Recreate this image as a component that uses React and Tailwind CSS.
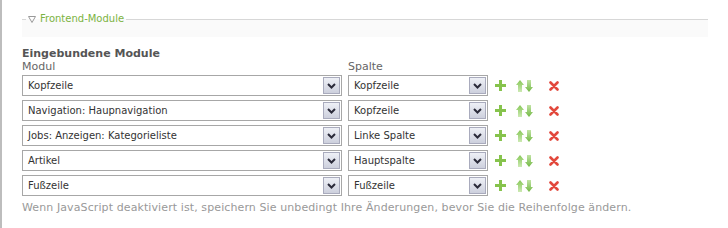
import React from "react";

const rows = [
  ["Kopfzeile", "Kopfzeile"],
  ["Navigation: Haupnavigation", "Kopfzeile"],
  ["Jobs: Anzeigen: Kategorieliste", "Linke Spalte"],
  ["Artikel", "Hauptspalte"],
  ["Fußzeile", "Fußzeile"],
];

// Old-style select box with grey dropdown button
function Select({ value, width }) {
  return (
    <div className={`${width} h-[21px] border border-[#a7a7a7] bg-white flex items-center`}>
      <span className="flex-1 pl-[5px] text-[10px] text-[#333] leading-none truncate">{value}</span>
      <span className="w-[17px] h-[17px] mr-[1px] border border-[#a9abbd] bg-gradient-to-b from-[#eef0f6] to-[#cdd0dd] flex items-center justify-center">
        <svg width="9" height="6" viewBox="0 0 9 6">
          <path d="M1 1 L4.5 4.5 L8 1" fill="none" stroke="#2b2b3a" strokeWidth="2" />
        </svg>
      </span>
    </div>
  );
}

function Plus() {
  return (
    <svg width="11" height="11" viewBox="0 0 11 11">
      <path d="M4 0h3v4h4v3H7v4H4V7H0V4h4z" fill="#86c34c" />
    </svg>
  );
}

function Up() {
  return (
    <svg width="8" height="12" viewBox="0 0 8 12">
      <defs>
        <linearGradient id="ug" x1="0" y1="0" x2="0" y2="1">
          <stop offset="0" stopColor="#86c756" />
          <stop offset="1" stopColor="#cdeab4" />
        </linearGradient>
      </defs>
      <path d="M4 0 L8 5 H6 V12 H2 V5 H0 Z" fill="url(#ug)" />
    </svg>
  );
}

function Down() {
  return (
    <svg width="8" height="12" viewBox="0 0 8 12">
      <defs>
        <linearGradient id="dg" x1="0" y1="0" x2="0" y2="1">
          <stop offset="0" stopColor="#c2e4a6" />
          <stop offset="1" stopColor="#72b843" />
        </linearGradient>
      </defs>
      <path d="M4 12 L8 7 H6 V0 H2 V7 H0 Z" fill="url(#dg)" />
    </svg>
  );
}

function Cross() {
  return (
    <svg width="10" height="10" viewBox="0 0 10 10">
      <path d="M1.5 1.5 L8.5 8.5 M8.5 1.5 L1.5 8.5" stroke="#e2483c" strokeWidth="2.6" strokeLinecap="round" />
    </svg>
  );
}

export default function App() {
  return (
    <div className="w-[728px] h-[228px] bg-white border-l-2 border-[#bdbdbd] font-['DejaVu_Sans',Verdana,sans-serif] overflow-hidden">
      <div className="pl-[20px] pt-[13px]">
        {/* Section header */}
        <fieldset className="w-[686px] h-[24px] border-0 border-t border-[#d7d7d7] bg-[#fafafa]">
          <legend className="ml-[4px] px-[2px] flex items-center gap-[4px] text-[10px] leading-[12px] text-[#7cb342]">
            <svg width="8" height="7" viewBox="0 0 8 7">
              <path d="M0.5 0.5 H7.5 L4 6.5 Z" fill="none" stroke="#9a9a9a" strokeWidth="1" />
            </svg>
            Frontend-Module
          </legend>
        </fieldset>

        {/* Module list */}
        <div className="mt-[10px]">
          <div className="text-[11px] font-bold text-[#555] leading-[13px]">Eingebundene Module</div>
          <div className="flex text-[11px] text-[#666] leading-[14px]">
            <span className="w-[326px]">Modul</span>
            <span>Spalte</span>
          </div>
          <div className="mt-[1px] flex flex-col gap-[4px]">
            {rows.map(([mod, col], i) => (
              <div key={i} className="flex items-center">
                <Select value={mod} width="w-[320px]" />
                <div className="ml-[6px]">
                  <Select value={col} width="w-[140px]" />
                </div>
                <div className="ml-[7px] flex items-center">
                  <Plus />
                  <span className="ml-[10px]"><Up /></span>
                  <span className="ml-[1px]"><Down /></span>
                  <span className="ml-[16px]"><Cross /></span>
                </div>
              </div>
            ))}
          </div>
          <p className="mt-[5px] text-[11px] tracking-[0.1px] text-[#999] leading-[13px]">
            Wenn JavaScript deaktiviert ist, speichern Sie unbedingt Ihre Änderungen, bevor Sie die Reihenfolge ändern.
          </p>
        </div>
      </div>
    </div>
  );
}
